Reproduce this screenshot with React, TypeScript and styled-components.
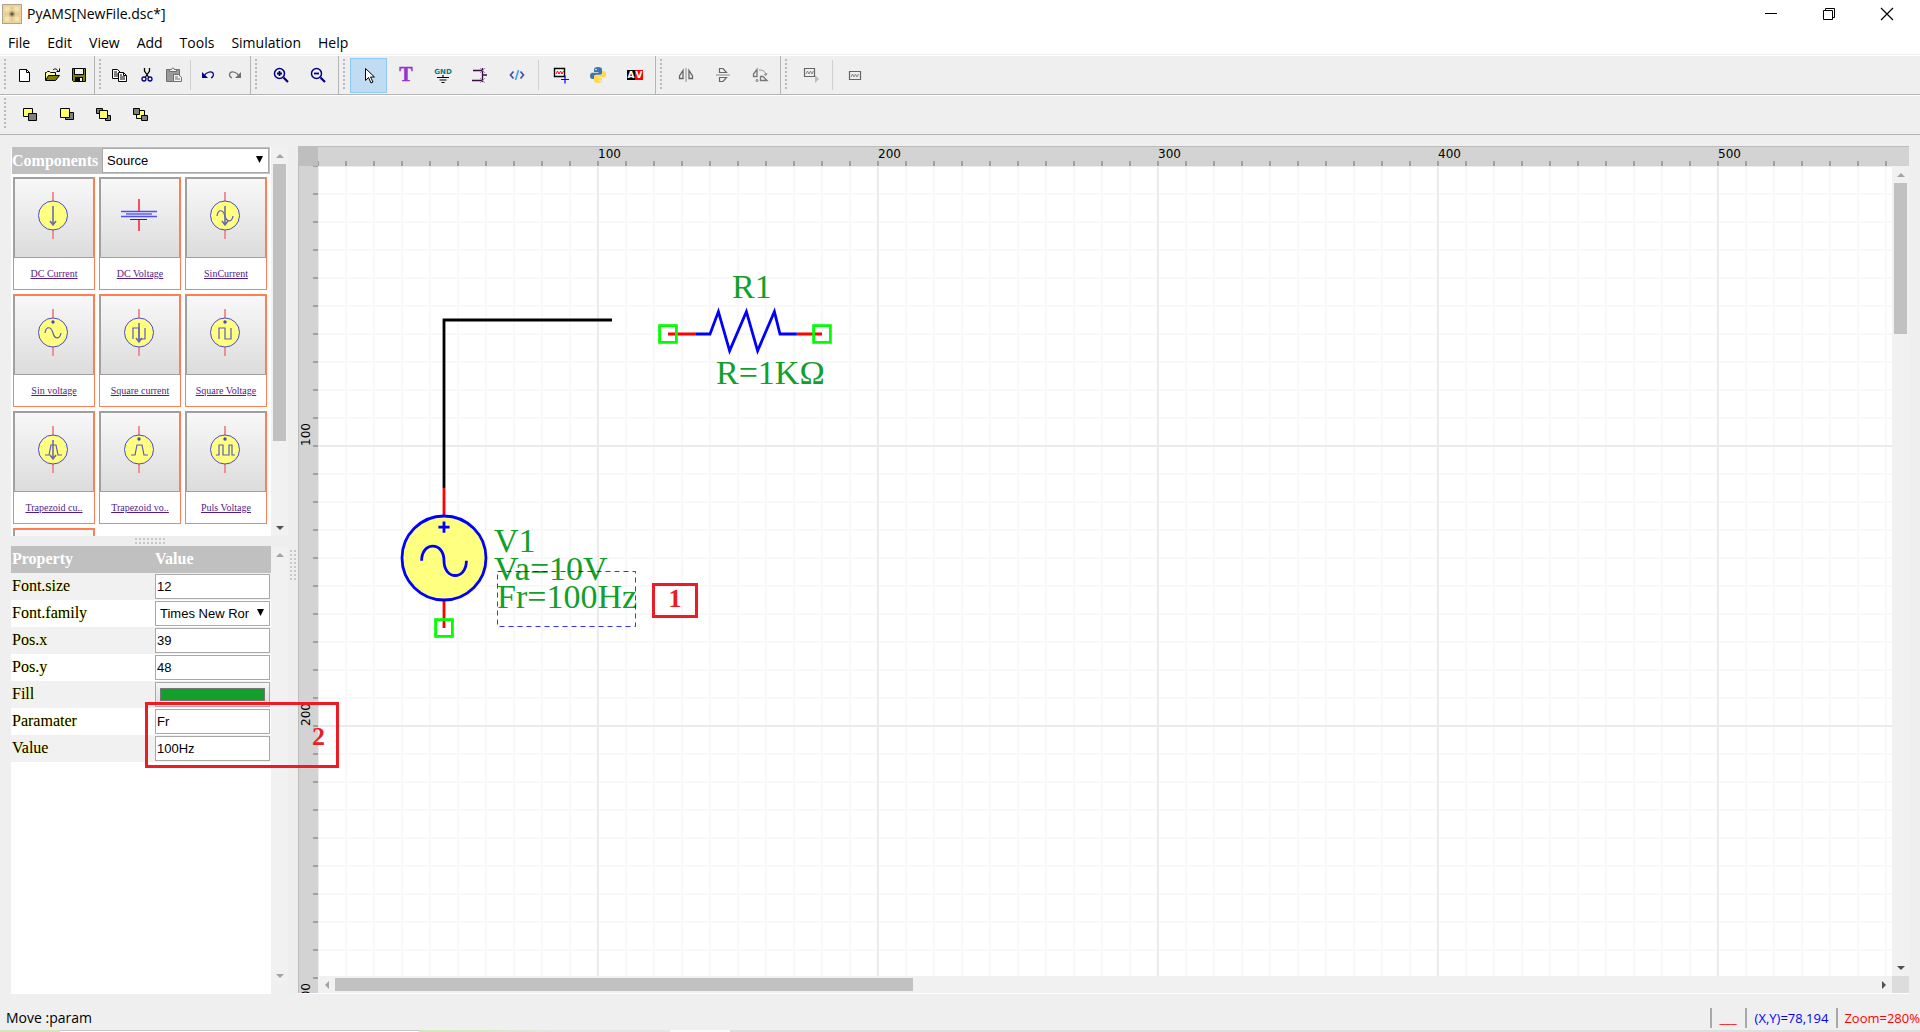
import React, { useState } from "react";
import styled, { createGlobalStyle, css } from "styled-components";

const UI = `"Open Sans", "Noto Sans", sans-serif`;
const SERIF = `"Liberation Serif", serif`;
const SANS = `"Liberation Sans", sans-serif`;

const GlobalStyle = createGlobalStyle`
  * { box-sizing: border-box; }
  body { margin: 0; background: #efefef; font-family: ${UI}; }
  button, input, select { font: inherit; color: inherit; }
`;

/* ---------- window frame ---------- */

const Window = styled.div`
  display: flex;
  flex-direction: column;
  height: 100vh;
  overflow: hidden;
  background: #efefef;
  color: #000;
`;

const TitleBar = styled.header`
  display: flex;
  align-items: center;
  height: 28px;
  padding: 0 4px 0 2px;
  background: #fff;
`;

const Title = styled.h1`
  flex: 1;
  margin: 0;
  padding-left: 5px;
  font-size: 14px;
  font-weight: 400;
  line-height: 20px;
`;

const CaptionButton = styled.button`
  display: grid;
  place-items: center;
  width: 58px;
  height: 28px;
  padding: 0;
  border: 0;
  background: none;
`;

const MenuBar = styled.nav`
  display: flex;
  gap: 17px;
  height: 28px;
  padding: 5px 8px 0;
  background: #fff;
  border-bottom: 1px solid #fff;
  box-shadow: inset 0 -1px 0 #f0f0f0;
`;

const MenuItem = styled.button`
  height: 20px;
  padding: 0;
  border: 0;
  background: none;
  font-size: 14px;
  line-height: 20px;
`;

/* ---------- tool bars ---------- */

const ToolRow = styled.div`
  display: flex;
  height: 39px;
  border-bottom: 1px solid #b4b4b4;
  & + & {
    height: 40px;
    padding-bottom: 2px;
    border-top: 1px solid #fff;
  }
`;

const ToolGroup = styled.div<{ $last?: boolean }>`
  display: flex;
  align-items: center;
  padding-right: 2px;
  ${(p) => !p.$last && css`border-right: 1px solid #b4b4b4;`}
`;

const Grip = styled.span`
  width: 3px;
  height: 32px;
  margin: 0 4px;
  background: radial-gradient(circle at 1px 1px, #b9b9b9 1px, transparent 1px) 0 0 / 3px 4px;
`;

const ToolButton = styled.button<{ $small?: boolean; $on?: boolean }>`
  display: grid;
  place-items: center;
  width: ${(p) => (p.$small ? 27 : 37)}px;
  height: 35px;
  padding: 0;
  border: 1px solid ${(p) => (p.$on ? "#90c8f6" : "transparent")};
  background: ${(p) => (p.$on ? "#c0dcf3" : "none")};
`;

const ToolSeparator = styled.span`
  width: 1px;
  height: 30px;
  margin: 0 3px;
  background: #cfcfcf;
`;

/* ---------- work area ---------- */

const Work = styled.main`
  display: flex;
  flex: 1;
  min-height: 0;
  padding: 11px 11px 0;
`;

const Side = styled.aside`
  display: flex;
  flex-direction: column;
  width: 277px;
  padding-top: 1px;
`;

const Pane = styled.section<{ $grow?: boolean }>`
  position: relative;
  display: flex;
  ${(p) => (p.$grow ? css`flex: 1; min-height: 0;` : css`height: 389px;`)}
`;

const PaneBody = styled.div`
  display: flex;
  flex-direction: column;
  width: 260px;
  overflow: hidden;
  background: #fff;
`;

const PaneHeader = styled.div`
  display: flex;
  align-items: center;
  flex: none;
  height: 27px;
  margin: 0 1px;
  padding-right: 1px;
  background: #c0c0c0;
  color: #fff;
  font: 700 16px/27px ${SERIF};
`;

const HeaderLabel = styled.label`
  width: 90px;
`;

const SelectBox = styled.span`
  position: relative;
  display: flex;
  flex: 1;
  height: 25px;
`;

const Select = styled.select`
  width: 100%;
  height: 25px;
  padding: 0 20px 0 4px;
  border: 1px solid #a9a9a9;
  border-radius: 0;
  background: #fff;
  color: #000;
  appearance: none;
  font: 13px/23px ${SANS};
`;

const SelectArrow = styled.svg`
  position: absolute;
  right: 6px;
  top: 8px;
  pointer-events: none;
`;

const PartGrid = styled.div`
  display: grid;
  grid-template-columns: repeat(3, 82px);
  gap: 4px;
  padding: 3px 2px;
`;

const PartCard = styled.div`
  display: flex;
  flex-direction: column;
  align-items: center;
  height: 113px;
  border: 1px solid #ff7f50;
`;

const PartButton = styled.button`
  flex: none;
  width: 80px;
  height: 80px;
  padding: 0;
  border: 1px solid #a0a0a0;
  background: linear-gradient(#f8f8f8, #dcdcdc);
  svg { display: block; }
`;

const PartLink = styled.a`
  margin-top: 10px;
  color: #551a8b;
  font: 10px/12px ${SERIF};
`;

const PaneSplitter = styled.div`
  display: grid;
  place-items: center;
  width: 277px;
  height: 10px;
  background: #eee;
`;

const SideSplitter = styled.div`
  display: flex;
  justify-content: center;
  width: 10px;
  padding-top: 404px;
  background: #eee;
`;

const Dots = styled.span<{ $vertical?: boolean }>`
  width: ${(p) => (p.$vertical ? 6 : 30)}px;
  height: ${(p) => (p.$vertical ? 30 : 6)}px;
  background: linear-gradient(90deg, transparent 2px, #eee 2px) 0 0 / 4px 4px,
    linear-gradient(#c8c8c8 2px, #eee 2px) 0 0 / 4px 4px;
`;

const PropertyTable = styled.table`
  width: 260px;
  table-layout: fixed;
  border-collapse: collapse;
  font: 16px/24px ${SERIF};
`;

const HeadCell = styled.th`
  height: 27px;
  padding: 0 1px 1px;
  background: #c0c0c0;
  color: #fff;
  text-align: left;
  &:first-child { width: 143px; }
`;

const PropertyRow = styled.tr`
  &:nth-child(odd) { background: #f1f1f1; }
`;

const PropertyCell = styled.td`
  height: 27px;
  padding: 1px;
  vertical-align: top;
`;

const PropertyLabel = styled.label`
  display: block;
  text-shadow: 0 0 1px #ff0;
`;

const PropertyInput = styled.input`
  display: block;
  width: 115px;
  height: 25px;
  padding: 0 1px;
  border: 1px solid #a9a9a9;
  background: #fff;
  font: 13px/23px ${SANS};
`;

const ColorInput = styled.input`
  display: block;
  width: 115px;
  height: 25px;
  padding: 0;
  border: 1px solid #a9a9a9;
  background: linear-gradient(#f6f6f6, #dcdcdc);
  appearance: none;
  &::-webkit-color-swatch-wrapper { padding: 5px 4px; }
  &::-webkit-color-swatch { border: 1px solid #777; border-radius: 0; }
`;

/* ---------- scroll bars ---------- */

const Scroller = styled.div<{ $horizontal?: boolean; $gapBelow?: boolean }>`
  display: flex;
  flex: none;
  flex-direction: ${(p) => (p.$horizontal ? "row" : "column")};
  ${(p) => (p.$horizontal ? "height" : "width")}: 17px;
  margin-bottom: ${(p) => (p.$gapBelow ? 10 : 0)}px;
  background: #f1f1f1;
`;

const ScrollArrow = styled.button`
  display: grid;
  place-items: center;
  flex: none;
  width: 17px;
  height: 17px;
  padding: 0;
  border: 0;
  background: none;
`;

const ScrollTrack = styled.div`
  flex: 1;
`;

const ScrollThumb = styled.div<{ $horizontal?: boolean; $size: number }>`
  ${(p) =>
    p.$horizontal
      ? css`width: ${p.$size}%; height: 13px; margin-top: 2px;`
      : css`height: ${p.$size}%; width: 13px; margin-left: 2px;`}
  background: #c1c1c1;
`;

/* ---------- drawing sheet ---------- */

const Sheet = styled.section`
  display: grid;
  flex: 1;
  min-width: 0;
  grid-template: 20px 1fr 17px / 20px 1fr 17px;
  border-bottom: 1px solid #fff;
`;

const RulerCorner = styled.div`
  background: #bebebe;
`;

const Ruler = styled.div<{ $horizontal?: boolean }>`
  overflow: hidden;
  background: #d3d3d3;
  ${(p) =>
    p.$horizontal
      ? css`grid-column: 2 / 4; box-shadow: inset 0 1px 0 #bcbcbc;`
      : css`grid-row: 2 / 4; grid-column: 1; box-shadow: inset 1px 0 0 #bcbcbc;`}
  svg { display: block; width: 100%; height: 100%; }
  text { font: 12px "DejaVu Sans", sans-serif; }
`;

const Viewport = styled.div`
  position: relative;
  overflow: hidden;
  background: #fff;
`;

const Drawing = styled.svg`
  display: block;
  width: 100%;
  height: 100%;
  text { font: 34px ${SERIF}; fill: #13a02a; }
`;

const ScrollCorner = styled.div`
  background: #dcdcdc;
`;

const Callout = styled.div<{ $x: number; $y: number; $w: number; $h: number; $end?: boolean }>`
  position: absolute;
  left: ${(p) => p.$x}px;
  top: ${(p) => p.$y}px;
  z-index: 2;
  display: flex;
  align-items: center;
  justify-content: ${(p) => (p.$end ? "flex-end" : "center")};
  width: ${(p) => p.$w}px;
  height: ${(p) => p.$h}px;
  padding: ${(p) => (p.$end ? "4px 11px 0 0" : "0 0 4px")};
  border: 3px solid #ed1c24;
  color: #ed1c24;
  font: 700 26px/26px ${SERIF};
  pointer-events: none;
`;

/* ---------- status bar ---------- */

const StatusBar = styled.footer`
  display: flex;
  align-items: center;
  height: 36px;
  padding: 12px 0 0 6px;
  font-size: 14px;
  line-height: 20px;
`;

const StatusText = styled.span`
  flex: 1;
`;

const StatusField = styled.span<{ $color: string }>`
  height: 20px;
  padding: 0 8px;
  border-left: 2px solid #a8a8a8;
  color: ${(p) => p.$color};
  font-size: 13px;
  &:last-child { padding: 0 0 0 6px; }
`;

const EdgeStrip = styled.div`
  height: 2px;
  background: linear-gradient(
      90deg,
      #d3e8b6 60px,
      transparent 60px,
      transparent 419px,
      #d3e8b6 419px,
      #d8e6c4 480px,
      #e6e6e6 560px,
      #e6e6e6 670px,
      #f8f8f8 670px,
      #f8f8f8 730px,
      #dedede 730px
    ),
    linear-gradient(#c8c8c8 1px, #fff 1px);
`;

/* ---------- icons ---------- */

const IconSvg = styled.svg`
  overflow: visible;
`;

const Icon = ({ w = 18, h = 18, children }: { w?: number; h?: number; children: React.ReactNode }) => (
  <IconSvg width={w} height={h} viewBox={`0 0 ${w} ${h}`} fill="none" aria-hidden="true">
    {children}
  </IconSvg>
);

const AppIcon = () => (
  <Icon w={20} h={20}>
    <rect x="0.5" y="0.5" width="19" height="19" fill="#ecd59b" stroke="#a9a48f" />
    <path d="M3 3h4v4H3zM13 3h4v4h-4zM3 13h4v4H3zM13 13h4v4h-4z" fill="#f4e3b4" />
    <path d="M10 2v16M2 10h16" stroke="#dcc488" />
    <circle cx="10" cy="10" r="3" fill="#b9a77c" />
    <circle cx="10" cy="10" r="1.5" fill="#5b5448" />
  </Icon>
);

const icons: Record<string, React.ReactNode> = {
  new: (
    <Icon>
      <path d="M3.500 3.500h7l3 3v9h-10z" fill="#fff" stroke="#000" />
      <path d="M10.500 3.500v3h3" stroke="#000" />
    </Icon>
  ),
  open: (
    <Icon>
      <path d="M2.500 14V6.500h1l1-1h2l1 1h5V9" fill="#ff8" stroke="#000" />
      <path d="M2.500 14.500l3-5h11l-4 5z" fill="#808000" stroke="#000" />
      <path d="M10 4c2-2 4-1 5 1M16.500 2.500v3h-3" stroke="#000" />
    </Icon>
  ),
  save: (
    <Icon>
      <path d="M2.500 2.500h13v13h-12l-1-1z" fill="#808000" stroke="#000" />
      <path d="M4.500 2.500h9v6h-9z" fill="#efefef" stroke="#000" />
      <path d="M5 11h8v5H5z" fill="#000" />
      <path d="M10 12h2v3h-2z" fill="#efefef" />
    </Icon>
  ),
  copy: (
    <Icon>
      <path d="M1.500 3.500h5l3 3v6h-8z" fill="#fff" stroke="#000" />
      <path d="M3 6h3M3 8h4M3 10h4" stroke="#000" />
      <path d="M7.500 6.500h5l3 3v6h-8z" fill="#fff" stroke="#000" />
      <path d="M12.500 6.500v3h3M9 9h2M9 11h5M9 13h5" stroke="#000" />
    </Icon>
  ),
  cut: (
    <Icon>
      <path d="M6.500 2v3l4 6M11.500 2v3l-4 6" stroke="#000" strokeWidth="1.300" />
      <circle cx="6" cy="13" r="2" stroke="#000080" strokeWidth="1.300" />
      <circle cx="12" cy="13" r="2" stroke="#000080" strokeWidth="1.300" />
    </Icon>
  ),
  paste: (
    <Icon>
      <path d="M1.500 3.500h13v12h-13z" fill="#9a9a9a" stroke="#6e6e6e" />
      <path d="M4.500 5.500v-2h2l1-1.500h1l1 1.500h2v2z" fill="#efefef" stroke="#6e6e6e" />
      <path d="M8.500 8.500h5l3 3v4h-8z" fill="#f4f4f4" stroke="#6e6e6e" />
      <path d="M10 11h3M10 13h5" stroke="#6e6e6e" />
    </Icon>
  ),
  undo: (
    <Icon>
      <path d="M3 6v6h6z" fill="#000080" />
      <path d="M5 10c2-4 7-5 9-3 1 2 0 4-2 5" stroke="#000080" strokeWidth="1.300" />
    </Icon>
  ),
  redo: (
    <Icon>
      <path d="M15 6v6H9z" fill="#707070" />
      <path d="M13 10c-2-4-7-5-9-3-1 2 0 4 2 5" stroke="#707070" strokeWidth="1.300" />
    </Icon>
  ),
  zoomIn: (
    <Icon>
      <circle cx="7.500" cy="7.500" r="5" stroke="#000080" strokeWidth="1.500" />
      <path d="M5 7.500h5M7.500 5v5" stroke="#000080" strokeWidth="1.800" />
      <path d="M11.500 11.500l4.500 4.500" stroke="#000080" strokeWidth="2.200" />
    </Icon>
  ),
  zoomOut: (
    <Icon>
      <circle cx="7.500" cy="7.500" r="5" stroke="#000080" strokeWidth="1.500" />
      <path d="M5 7.500h5" stroke="#000080" strokeWidth="1.800" />
      <path d="M11.500 11.500l4.500 4.500" stroke="#000080" strokeWidth="2.200" />
    </Icon>
  ),
  pointer: (
    <Icon>
      <path d="M5.500 2.500v12l3-3 2.500 5.500 2-1-2.500-5h4z" fill="#fff" stroke="#000" />
    </Icon>
  ),
  text: (
    <Icon>
      <text
        x="9"
        y="15"
        textAnchor="middle"
        fontFamily="Liberation Serif, serif"
        fontWeight="700"
        fontSize="20"
        fill="#9a32cd"
        stroke="#9a32cd"
        strokeWidth="0.500"
      >
        T
      </text>
    </Icon>
  ),
  ground: (
    <Icon>
      <text x="9" y="8" textAnchor="middle" fontFamily="DejaVu Sans, sans-serif" fontWeight="700" fontSize="7" fill="#008080">
        GND
      </text>
      <path d="M9 9v3M3 11.500h12M5.500 14h7M7.500 16.500h3" stroke="#000" strokeWidth="1.200" />
    </Icon>
  ),
  pins: (
    <Icon>
      <path d="M2 4.500h10M1 14.500h11M12 9h4M11.500 2v14" stroke="#3b0a45" strokeWidth="1.300" />
      <path d="M9 2l5 5M14 2l-5 5M9 12l5 5M14 12l-5 5" stroke="#8a7a90" strokeWidth="0.800" />
    </Icon>
  ),
  code: (
    <Icon>
      <path d="M5.500 5.500L2.500 9l3 3.500M12.500 5.500l3 3.500-3 3.500" stroke="#3f51b5" strokeWidth="1.700" />
      <path d="M10.500 4l-3 10" stroke="#42a5f5" strokeWidth="1.700" />
    </Icon>
  ),
  addWave: (
    <Icon>
      <path d="M2.500 2.500h10v8h-10z" fill="#fff" stroke="#000" strokeWidth="1.400" />
      <path d="M4 8l1.500-3L7 8l1.500-3L10 8l1.500-3" stroke="#f00" />
      <path d="M9 13.500h8M13 9.500v8" stroke="#00f" strokeWidth="1.200" />
    </Icon>
  ),
  python: (
    <Icon>
      <path d="M9 1C6 1 5 2 5 3.500V6h4.500v.7H3.300C1.700 6.700 1 8 1 10s1 3 2.200 3H5v-2c0-1.500 1-2.300 2.300-2.300h4C12.500 8.700 13 8 13 7V3.500C13 2 12 1 9 1z" fill="#3d77a8" />
      <path d="M9 17c3 0 4-1 4-2.500V12H8.500v-.7h6.200c1.600 0 2.300-1.300 2.300-3.300s-1-3-2.200-3H13v2c0 1.500-1 2.300-2.300 2.300h-4C5.500 9.300 5 10 5 11v3.500C5 16 6 17 9 17z" fill="#ffd94c" />
      <circle cx="7" cy="3.500" r="0.800" fill="#fff" />
      <circle cx="11" cy="14.500" r="0.800" fill="#fff" />
    </Icon>
  ),
  av: (
    <Icon>
      <path d="M1 4h8v10H1z" fill="#000" />
      <path d="M9 4h8v10H9z" fill="#f00" />
      <text x="5" y="12" textAnchor="middle" fontFamily="DejaVu Sans, sans-serif" fontWeight="700" fontSize="9" fill="#fff">
        A
      </text>
      <text x="13" y="12" textAnchor="middle" fontFamily="DejaVu Sans, sans-serif" fontWeight="700" fontSize="9" fill="#fff">
        V
      </text>
    </Icon>
  ),
  flipH: (
    <Icon>
      <path d="M9 2v14" stroke="#8c8c8c" />
      <path d="M6 4.500v8H2.500V10zM12 4.500v8h3.500V10z" stroke="#666" strokeWidth="1.300" />
    </Icon>
  ),
  flipV: (
    <Icon>
      <path d="M2 9h14" stroke="#8c8c8c" />
      <path d="M5.500 6.500h7L9 2.500H5.500zM5.500 11.500h7L9 15.500H5.500z" stroke="#666" strokeWidth="1.200" />
    </Icon>
  ),
  rotate: (
    <Icon>
      <path d="M6 3.500v7H2.500V8zM16 14.500H9.500v-4h2.500z" stroke="#777" strokeWidth="1.300" />
      <path d="M8 4c4 0 6 1 7 5M13 8l2 1.500L16 7" stroke="#8c8c8c" />
      <circle cx="6" cy="14.500" r="1" stroke="#777" />
    </Icon>
  ),
  runWave: (
    <Icon>
      <path d="M2.500 2.500h10v8h-10z" stroke="#666" strokeWidth="1.200" />
      <path d="M4 8l1.500-3L7 8l1.500-3L10 8l1.500-3" stroke="#888" />
      <path d="M13 9l4 4-4 4z" fill="#bbb" />
    </Icon>
  ),
  wave: (
    <Icon>
      <path d="M3.500 5.500h11v8h-11z" stroke="#666" strokeWidth="1.200" />
      <path d="M5 11l1.500-3L8 11l1.500-3L11 11l1.500-3" stroke="#888" />
    </Icon>
  ),
  toFront: (
    <Icon>
      <path d="M2.500 3.500h9v8h-9z" fill="#ff6" stroke="#000" />
      <path d="M7.500 8.500h8v7h-8z" fill="#808080" stroke="#000" />
    </Icon>
  ),
  toBack: (
    <Icon>
      <path d="M7.500 7.500h8v7h-8z" fill="#808080" stroke="#000" />
      <path d="M2.500 3.500h9v9h-9z" fill="#ff6" stroke="#000" />
    </Icon>
  ),
  forward: (
    <Icon>
      <path d="M1.500 3.500h6v5h-6zM10.500 10.500h5v5h-5z" fill="#808080" stroke="#000" />
      <path d="M4.500 5.500h8v8h-8z" fill="#ff6" stroke="#000" />
    </Icon>
  ),
  backward: (
    <Icon>
      <path d="M4.500 5.500h8v8h-8z" fill="#ff6" stroke="#000" />
      <path d="M1.500 3.500h6v6h-6zM9.500 10.500h6v5h-6z" fill="#808080" stroke="#000" />
    </Icon>
  ),
};

const arrowPaths = { up: "M4 0l4 4H0z", down: "M0 0h8L4 4z", left: "M4 0v8L0 4z", right: "M0 0l4 4-4 4z" };

const Arrow = ({ dir, dark }: { dir: keyof typeof arrowPaths; dark?: boolean }) => {
  const flat = dir === "up" || dir === "down";
  return (
    <Icon w={flat ? 8 : 4} h={flat ? 4 : 8}>
      <path d={arrowPaths[dir]} fill={dark ? "#505050" : "#a3a3a3"} />
    </Icon>
  );
};

/* ---------- data ---------- */

const menus = ["File", "Edit", "View", "Add", "Tools", "Simulation", "Help"];

type Tool = { id: string; label: string } | null;
type Group = { small?: boolean; tools: Tool[] };

const t = (id: string, label: string): Tool => ({ id, label });

const mainTools: Group[] = [
  { small: true, tools: [t("new", "New"), t("open", "Open"), t("save", "Save")] },
  { small: true, tools: [t("copy", "Copy"), t("cut", "Cut"), t("paste", "Paste"), null, t("undo", "Undo"), t("redo", "Redo")] },
  { tools: [t("zoomIn", "Zoom in"), t("zoomOut", "Zoom out")] },
  {
    tools: [
      t("pointer", "Select"), t("text", "Text"), t("ground", "Ground"), t("pins", "Wire"), t("code", "Code"), null,
      t("addWave", "Add probe"), t("python", "Python"), t("av", "Analysis"),
    ],
  },
  { tools: [t("flipH", "Flip horizontally"), t("flipV", "Flip vertically"), t("rotate", "Rotate")] },
  { tools: [t("runWave", "Run"), null, t("wave", "Waveform")] },
];

const orderTools: Group[] = [
  { tools: [t("toFront", "Bring to front"), t("toBack", "Send to back"), t("forward", "Bring forward"), t("backward", "Send backward")] },
];

const SINE = "M30 37c1-7 6-7 8 0s7 6 8 0";
const SQUARE = "M32 43V32h6v11h6V32";
const TRAPEZOID = "M30 42h4l2-10h5l2 10h4";
const PULSE = "M29 42h3V32h4v10h6V32h3v10h3";

type Part = { name?: string; wave?: string; arrow?: boolean; battery?: boolean };

const parts: Part[] = [
  { name: "DC Current", arrow: true },
  { name: "DC Voltage", battery: true },
  { name: "SinCurrent", arrow: true, wave: SINE },
  { name: "Sin voltage", wave: SINE },
  { name: "Square current", arrow: true, wave: SQUARE },
  { name: "Square Voltage", wave: SQUARE },
  { name: "Trapezoid cu..", arrow: true, wave: TRAPEZOID },
  { name: "Trapezoid vo..", wave: TRAPEZOID },
  { name: "Puls Voltage", wave: PULSE },
  { arrow: true, wave: PULSE },
];

const PartSymbol = ({ part }: { part: Part }) => (
  <Icon w={78} h={78}>
    {part.battery ? (
      <>
        <path d="M38 20v13M38 41v11" stroke="#f05060" strokeWidth="2" />
        <path d="M20 32.500h36M20 37.500h36" stroke="#5050f8" strokeWidth="1.400" />
        <path d="M25 35h26M29 40.500h17" stroke="#1a1aee" />
      </>
    ) : (
      <>
        <path d="M38 13v9M38 51v9" stroke="#f09090" strokeWidth="2" />
        <circle cx="38" cy="36.500" r="14.500" fill="#ffff80" stroke="#4a4ad0" />
        {part.wave && <path d={part.wave} stroke="#5a5ac0" strokeWidth="1.200" />}
        {part.arrow ? (
          <path d="M38 27v18M35 42l3 4 3-4" stroke="#6c6ca8" strokeWidth="1.600" />
        ) : (
          <circle cx="38" cy="26" r="1.700" fill="#4a4ab8" />
        )}
      </>
    )}
  </Icon>
);

const properties = [
  { name: "Font.size", value: "12" },
  { name: "Font.family", value: "Times New Roman", kind: "select" },
  { name: "Pos.x", value: "39" },
  { name: "Pos.y", value: "48" },
  { name: "Fill", value: "#13a02a", kind: "color" },
  { name: "Paramater", value: "Fr" },
  { name: "Value", value: "100Hz" },
];

/* ---------- composed pieces ---------- */

const Tools = ({ groups }: { groups: Group[] }) => {
  const [active, setActive] = useState("pointer");
  return (
    <ToolRow role="toolbar">
      {groups.map((group, g) => (
        <ToolGroup key={g} $last={g === groups.length - 1}>
          <Grip />
          {group.tools.map((tool, i) =>
            tool ? (
              <ToolButton
                key={tool.id}
                type="button"
                aria-label={tool.label}
                $small={group.small}
                $on={tool.id === active}
                onClick={() => setActive(tool.id)}
              >
                {icons[tool.id]}
              </ToolButton>
            ) : (
              <ToolSeparator key={i} />
            )
          )}
        </ToolGroup>
      ))}
    </ToolRow>
  );
};

type ScrollBarProps = { horizontal?: boolean; size?: number; endDark?: boolean; gapBelow?: boolean };

const ScrollBar = ({ horizontal, size, endDark, gapBelow }: ScrollBarProps) => (
  <Scroller $horizontal={horizontal} $gapBelow={gapBelow}>
    <ScrollArrow type="button" aria-label="Scroll back">
      <Arrow dir={horizontal ? "left" : "up"} />
    </ScrollArrow>
    <ScrollTrack>{size ? <ScrollThumb $horizontal={horizontal} $size={size} /> : null}</ScrollTrack>
    <ScrollArrow type="button" aria-label="Scroll on">
      <Arrow dir={horizontal ? "right" : "down"} dark={endDark} />
    </ScrollArrow>
  </Scroller>
);

const DropDown = ({ id, value }: { id: string; value: string }) => (
  <SelectBox>
    <Select id={id} defaultValue={value}>
      <option>{value}</option>
    </Select>
    <SelectArrow width="7" height="7" viewBox="0 0 7 7" aria-hidden="true">
      <path d="M0 0h7L3.500 7z" fill="#000" />
    </SelectArrow>
  </SelectBox>
);

const CELL = 28;
const MAJOR = CELL * 10;
const columnMarks = [1, 2, 3, 4, 5];
const rowMarks = [1, 2, 3];
/* sheet units to screen pixels at the current zoom */
const ZOOM = 2.8;
const px = (units: number) => Math.round(units * ZOOM);

const Pin = ({ x, y }: { x: number; y: number }) => (
  <rect x={x - 3} y={y - 3} width="6" height="6" stroke="#00ff00" />
);

const Schematic = () => (
  <Drawing fill="none">
    <defs>
      <pattern id="minor" width={CELL} height={CELL} patternUnits="userSpaceOnUse">
        <path d={`M0 0H${CELL}M0 ${CELL}H${CELL}M0 0V${CELL}M${CELL} 0V${CELL}`} stroke="#f8f8f8" strokeWidth="2" />
      </pattern>
      <pattern id="major" width={MAJOR} height={MAJOR} patternUnits="userSpaceOnUse">
        <path d={`M0 0H${MAJOR}M0 ${MAJOR}H${MAJOR}M0 0V${MAJOR}M${MAJOR} 0V${MAJOR}`} stroke="#ebebeb" strokeWidth="2" />
      </pattern>
    </defs>
    <rect width="100%" height="100%" fill="url(#minor)" />
    <rect width="100%" height="100%" fill="url(#major)" />
    <g transform={`scale(${ZOOM})`}>
      <path d="M105 55H45V115" stroke="#000" />
      <path d="M45 115v10M45 155v10" stroke="#f00" />
      <circle cx="45" cy="140" r="15" fill="#ffff80" stroke="#00f" />
      <path d="M43 129h4M45 127v4" stroke="#00f" />
      <path d="M37 141c0-7 8-7 8 0s8 7 8 0" stroke="#00f" />
      <path d="M125 60h10M171 60h9" stroke="#f00" />
      <path d="M135 60h5l3-8 4 14 6-14 4 14 6-14 2 8h6" stroke="#00f" />
      <Pin x={45} y={165} />
      <Pin x={125} y={60} />
      <Pin x={180} y={60} />
    </g>
    <text x={px(148)} y={px(47)}>R1</text>
    <text x={px(142)} y={px(78)}>R=1KΩ</text>
    <text x={px(63)} y={px(138)}>V1</text>
    <text x={px(63)} y={px(148)}>Va=10V</text>
    <text x={px(64)} y={px(158)}>Fr=100Hz</text>
    <rect x="179.500" y="405.500" width="138" height="55" stroke="#0000ff" strokeOpacity="0.800" strokeDasharray="5 4" />
  </Drawing>
);

export default function App() {
  return (
    <Window>
      <GlobalStyle />
      <TitleBar>
        <AppIcon />
        <Title>PyAMS[NewFile.dsc*]</Title>
        <CaptionButton type="button" aria-label="Minimize">
          <Icon w={12} h={12}><path d="M0 5.500h12" stroke="#000" /></Icon>
        </CaptionButton>
        <CaptionButton type="button" aria-label="Restore">
          <Icon w={12} h={12}><path d="M.5 2.500h9v9h-9zM2.500 2.500v-2h9v9h-2" stroke="#000" /></Icon>
        </CaptionButton>
        <CaptionButton type="button" aria-label="Close">
          <Icon w={12} h={12}><path d="M0 0l12 12M12 0L0 12" stroke="#000" strokeWidth="1.200" /></Icon>
        </CaptionButton>
      </TitleBar>
      <MenuBar>
        {menus.map((m) => (
          <MenuItem key={m} type="button">{m}</MenuItem>
        ))}
      </MenuBar>
      <Tools groups={mainTools} />
      <Tools groups={orderTools} />

      <Work>
        <Side>
          <Pane>
            <PaneBody>
              <PaneHeader>
                <HeaderLabel htmlFor="library">Components</HeaderLabel>
                <DropDown id="library" value="Source" />
              </PaneHeader>
              <PartGrid>
                {parts.map((part, i) => (
                  <PartCard key={i}>
                    <PartButton type="button" aria-label={part.name}>
                      <PartSymbol part={part} />
                    </PartButton>
                    {part.name && <PartLink href="#">{part.name}</PartLink>}
                  </PartCard>
                ))}
              </PartGrid>
            </PaneBody>
            <ScrollBar size={78} endDark />
          </Pane>
          <PaneSplitter>
            <Dots />
          </PaneSplitter>
          <Pane $grow>
            <PaneBody>
              <PropertyTable>
                <thead>
                  <tr>
                    <HeadCell>Property</HeadCell>
                    <HeadCell>Value</HeadCell>
                  </tr>
                </thead>
                <tbody>
                  {properties.map(({ name, value, kind }) => (
                    <PropertyRow key={name}>
                      <PropertyCell>
                        <PropertyLabel htmlFor={name}>{name}</PropertyLabel>
                      </PropertyCell>
                      <PropertyCell>
                        {kind === "select" ? (
                          <DropDown id={name} value={value} />
                        ) : kind === "color" ? (
                          <ColorInput id={name} type="color" defaultValue={value} />
                        ) : (
                          <PropertyInput id={name} defaultValue={value} />
                        )}
                      </PropertyCell>
                    </PropertyRow>
                  ))}
                </tbody>
              </PropertyTable>
            </PaneBody>
            <ScrollBar gapBelow />
            <Callout $x={134} $y={156} $w={194} $h={66} $end>2</Callout>
          </Pane>
        </Side>
        <SideSplitter>
          <Dots $vertical />
        </SideSplitter>
        <Sheet>
          <RulerCorner />
          <Ruler $horizontal>
            <svg>
              <defs>
                <pattern id="ticksX" width={CELL} height="20" patternUnits="userSpaceOnUse">
                  <path d={`M0 15v5M${CELL} 15v5`} stroke="#a0a0a0" strokeWidth="2" />
                </pattern>
              </defs>
              <rect width="100%" height="20" fill="url(#ticksX)" />
              {columnMarks.map((m) => (
                <text key={m} x={m * MAJOR} y="12">{m * 100}</text>
              ))}
            </svg>
          </Ruler>
          <Ruler>
            <svg>
              <defs>
                <pattern id="ticksY" width="20" height={CELL} patternUnits="userSpaceOnUse">
                  <path d={`M15 0h5M15 ${CELL}h5`} stroke="#a0a0a0" strokeWidth="2" />
                </pattern>
              </defs>
              <rect width="20" height="100%" fill="url(#ticksY)" />
              {rowMarks.map((m) => (
                <text key={m} transform={`translate(12 ${m * MAJOR}) rotate(-90)`}>{m * 100}</text>
              ))}
            </svg>
          </Ruler>
          <Viewport>
            <Schematic />
            <Callout $x={334} $y={417} $w={46} $h={35}>1</Callout>
          </Viewport>
          <ScrollBar size={19.4} endDark />
          <ScrollBar horizontal size={37.5} endDark />
          <ScrollCorner />
        </Sheet>
      </Work>

      <StatusBar>
        <StatusText>Move :param</StatusText>
        <StatusField $color="#f00">___</StatusField>
        <StatusField $color="#00f">(X,Y)=78,194</StatusField>
        <StatusField $color="#f00">Zoom=280%</StatusField>
      </StatusBar>
      <EdgeStrip />
    </Window>
  );
}
